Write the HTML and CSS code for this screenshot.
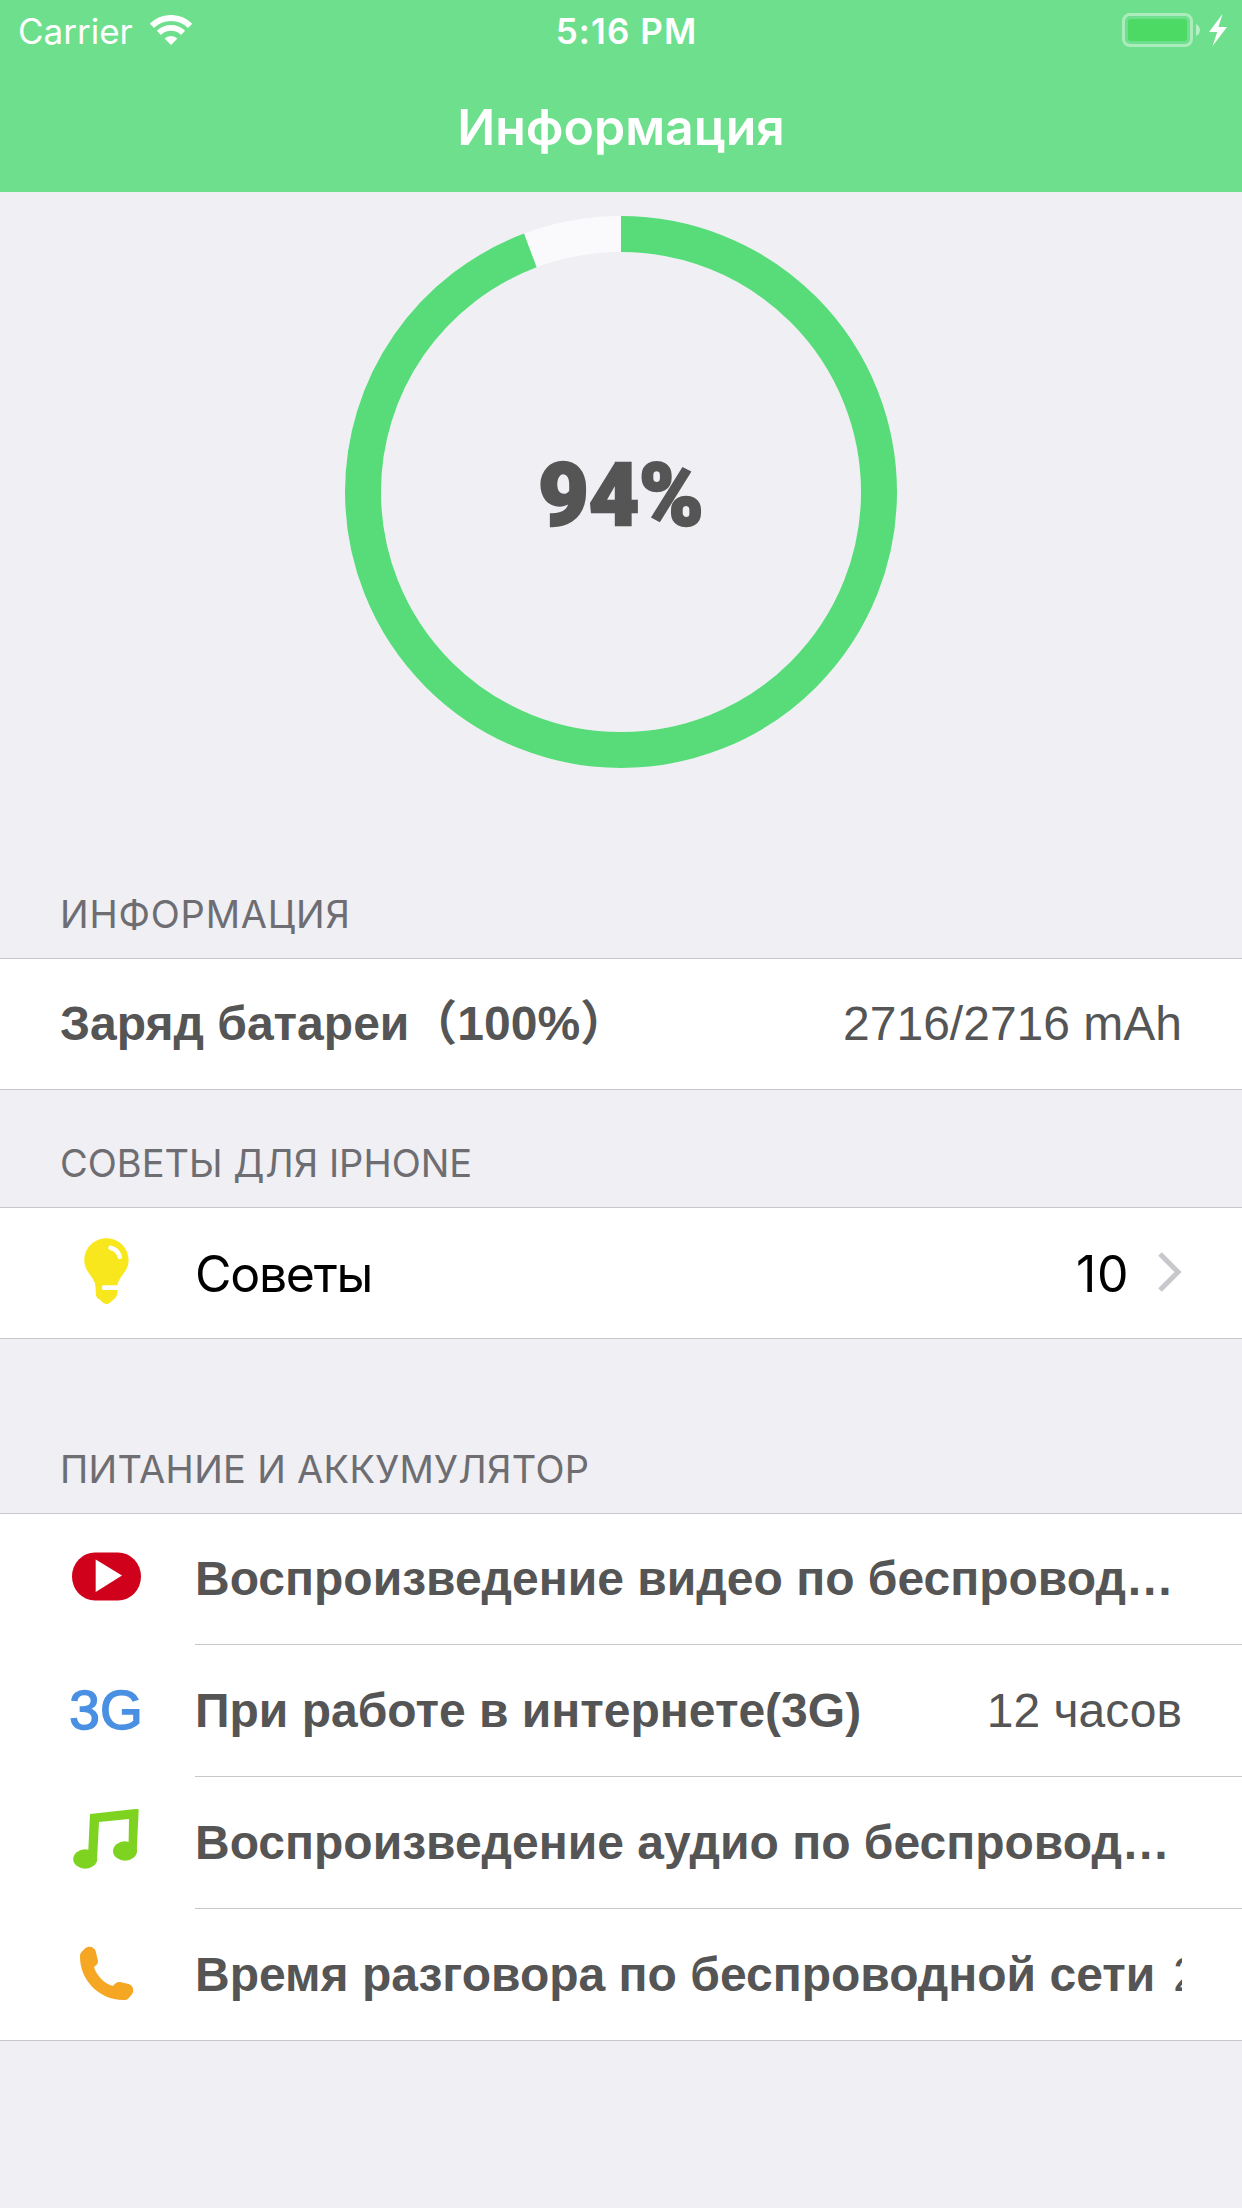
FILE: index.html
```html
<!DOCTYPE html>
<html lang="ru">
<head>
    <meta charset="UTF-8">
    <meta name="viewport" content="width=device-width, initial-scale=1.0">
    <title>Информация</title>
    <link rel="stylesheet" href="styles.css">
</head>
<body>
    <header class="header">
        <div class="status-bar">
            <div class="status-left">
                <span class="carrier">Carrier</span>
                <svg class="wifi" width="42" height="30" viewBox="0 0 42 30">
                    <path fill="#fff" d="M21 30l-6.4-6.4a9 9 0 0 1 12.8 0z"/>
                    <path fill="none" stroke="#fff" stroke-width="5.8" d="M8.9 17.9a17.1 17.1 0 0 1 24.2 0"/>
                    <path fill="none" stroke="#fff" stroke-width="6" d="M1.9 10.9a27 27 0 0 1 38.2 0"/>
                </svg>
            </div>
            <span class="time">5:16 PM</span>
            <div class="status-right">
                <svg width="106" height="34" viewBox="0 0 106 34">
                    <rect x="1.5" y="1.5" width="68" height="31" rx="6.5" fill="none" stroke="#fff" stroke-opacity=".42" stroke-width="3"/>
                    <rect x="6" y="6" width="59" height="22" rx="3" fill="#4cd964"/>
                    <path fill="#fff" fill-opacity=".5" d="M74 11c5.300 2 5.300 10 0 12z"/>
                    <path fill="#fff" d="M100.500 1L87 19h8.200l-4.600 14L105 14h-8.500z"/>
                </svg>
            </div>
        </div>
        <h1 class="title">Информация</h1>
    </header>

    <main>
        <div class="gauge">
            <svg class="gauge-ring" width="552" height="552" viewBox="0 0 552 552">
                <circle class="track" cx="276" cy="276" r="258"/>
                <circle class="progress" cx="276" cy="276" r="258" pathLength="100" transform="rotate(-90 276 276)"/>
            </svg>
            <span class="gauge-value">94%</span>
        </div>

        <h2 class="section-title info-title">Информация</h2>
        <div class="list">
            <div class="row">
                <span class="label">Заряд батареи（100%）</span>
                <span class="value">2716/2716 mAh</span>
            </div>
        </div>

        <h2 class="section-title tips-title">Советы для iPhone</h2>
        <div class="list">
            <div class="row tips">
                <svg class="icon" width="90" height="130" viewBox="0 0 90 130">
                    <path fill="#f8e71c" d="M45.500 30.300c-12.500 0-22.200 9.700-22.200 22.200 0 10 7.500 14.500 10.400 22 1 2.500 1 9 1.200 12.500.3 2.500 2 3.200 3.800 4.600 2.100 1.700 3.600 4.400 6.900 4.400s4.800-2.700 6.900-4.400c3.500-2.600 3.700-4.600 4.200-9.600H42.500c-2.200 0-2.200-4.800 0-4.800h14.200c0-7.500 10.900-13.500 10.900-24.700 0-12.500-9.800-22.200-22.100-22.200z"/>
                    <path fill="none" stroke="#fff" stroke-width="4.600" stroke-linecap="round" d="M49.500 39.800c5 1.200 8 4.400 9.300 9"/>
                </svg>
                <span class="tips-label">Советы</span>
                <span class="tips-count">10</span>
                <svg class="chevron" width="24" height="40" viewBox="0 0 24 40">
                    <path fill="none" stroke="#c7c7cc" stroke-width="5" d="M2 2l18 18L2 38"/>
                </svg>
            </div>
        </div>

        <h2 class="section-title power-title">Питание и аккумулятор</h2>
        <div class="list power">
            <div class="row">
                <svg class="icon" width="90" height="130" viewBox="0 0 90 130">
                    <rect x="11" y="37.500" width="69" height="48" rx="23" ry="24" fill="#d0021b"/>
                    <path fill="#fff" d="M34.700 44.500L61 60.500 34.700 77z"/>
                </svg>
                <div class="cell"><span class="label">Воспроизведение видео по беспровод…</span></div>
            </div>
            <div class="row">
                <span class="icon icon-3g">3G</span>
                <div class="cell">
                    <span class="label">При работе в интернете(3G)</span>
                    <span class="value">12 часов</span>
                </div>
            </div>
            <div class="row">
                <svg class="icon" width="90" height="132" viewBox="0 0 90 132">
                    <path fill="#7ed321" d="M29 37l40.500-4.500q5-.8 8.200-.2L75.700 75h-9l.9-10L68 42l-30 3-2 38-9-1 .3-9z"/>
                    <ellipse cx="24.200" cy="82" rx="12" ry="9.700" fill="#7ed321"/>
                    <ellipse cx="64" cy="74" rx="12" ry="9.700" fill="#7ed321"/>
                </svg>
                <div class="cell"><span class="label">Воспроизведение аудио по беспровод…</span></div>
            </div>
            <div class="row">
                <svg class="icon" width="90" height="132" viewBox="0 0 90 132">
                    <path fill="#f5a623" d="M19 48c0-3 .3-4 2-5.600l2.700-2.700c4-3.500 9.500-2 11 2.600L37 52c.3 2.800-2 4.200-4 6.300C36 67 43 74.500 51.700 77c2.300-2.500 4-4.300 7.300-4l8.700 2c4.500 1.500 5.800 7 3.300 10.300L67.300 89.500C66 91 65 91 62.500 91 37.500 91 19 70.500 19 48z"/>
                </svg>
                <div class="cell">
                    <span class="label">Время разговора по беспроводной сети</span>
                    <span class="value clipped">2</span>
                </div>
            </div>
        </div>
    </main>
</body>
</html>
```

FILE: styles.css
```css
:root {
    --header-color: #6edf8c;
    --ring-color: #57dc79;
    --bg-color: #efeff4;
    --line-color: #c8c7cc;
    --text-color: #555;
    --muted-color: #6d6d72;
}

* {
    box-sizing: border-box;
    margin: 0;
    padding: 0;
}

body {
    width: 1242px;
    height: 2208px;
    overflow: hidden;
    font-family: "Liberation Sans", "Noto Sans CJK SC", sans-serif;
    font-size: 48px;
    color: var(--text-color);
    background: var(--bg-color);
}

svg {
    display: block;
}

.header {
    height: 192px;
    background: var(--header-color);
    color: #fff;
    font-family: Inter, sans-serif;
}

.status-bar {
    display: grid;
    grid-template-columns: 1fr auto 1fr;
    align-items: center;
    height: 60px;
    padding: 0 14px 0 18px;
    font-size: 35px;
}

.status-left {
    display: flex;
    align-items: center;
    gap: 17px;
}

.carrier {
    padding-top: 2px;
}

.time {
    padding: 2px 0 0 7px;
    font-weight: 600;
    letter-spacing: 1.1px;
}

.status-right {
    display: flex;
    justify-content: flex-end;
}

.title {
    height: 132px;
    text-align: center;
    font-size: 50px;
    font-weight: 600;
    line-height: 134px;
}

.gauge {
    display: grid;
    place-items: center;
    height: 552px;
    margin-top: 24px;
}

.gauge > * {
    grid-area: 1 / 1;
}

.gauge-ring circle {
    fill: none;
    stroke-width: 36;
}

.gauge-ring .track {
    stroke: #fafafc;
}

.gauge-ring .progress {
    stroke: var(--ring-color);
    stroke-dasharray: 94.28 100;
}

.gauge-value {
    padding-top: 6px;
    font-family: Roboto, sans-serif;
    font-weight: 900;
    font-size: 87px;
    line-height: 1;
    -webkit-text-stroke: 2.5px var(--text-color);
}

.section-title {
    display: flex;
    align-items: flex-end;
    height: 190px;
    padding: 0 60px 21px;
    font-family: Inter, sans-serif;
    font-size: 38px;
    font-weight: 400;
    line-height: 46px;
    text-transform: uppercase;
    color: var(--muted-color);
}

.info-title {
    letter-spacing: 0.8px;
}

.tips-title {
    height: 117px;
}

.power-title {
    height: 174px;
    letter-spacing: 0.3px;
}

.list {
    background: #fff;
    border-top: 1px solid var(--line-color);
    border-bottom: 1px solid var(--line-color);
}

.row {
    display: flex;
    align-items: center;
    justify-content: space-between;
    height: 130px;
    padding: 0 60px;
    line-height: 56px;
    white-space: nowrap;
}

.label {
    font-weight: 700;
}

.icon {
    flex: none;
    width: 90px;
    margin-left: 1px;
    margin-right: 44px;
}

.tips {
    font-family: Inter, sans-serif;
    font-size: 50px;
    color: #000;
}

.tips-label {
    padding-top: 2px;
    letter-spacing: -1.3px;
}

.tips-count {
    margin-left: auto;
    margin-right: 29px;
    padding-top: 2px;
    letter-spacing: 0.5px;
}

.chevron {
    margin-bottom: 2px;
}

.power .row {
    height: 132px;
    padding-right: 0;
}

.power .row:first-child,
.power .row:last-child {
    height: 131px;
}

.cell {
    flex: 1;
    display: flex;
    align-items: center;
    justify-content: space-between;
    height: 100%;
    min-width: 0;
    padding-right: 60px;
    border-bottom: 1px solid var(--line-color);
}

.row:last-child .cell {
    border-bottom: none;
}

.icon-3g {
    padding-bottom: 2px;
    font-size: 55px;
    text-align: center;
    color: #4a90e2;
    -webkit-text-stroke: 1.5px #4a90e2;
}

/* only the start of the value fits beside the long label */
.clipped {
    width: 9px;
    overflow: hidden;
}
```
